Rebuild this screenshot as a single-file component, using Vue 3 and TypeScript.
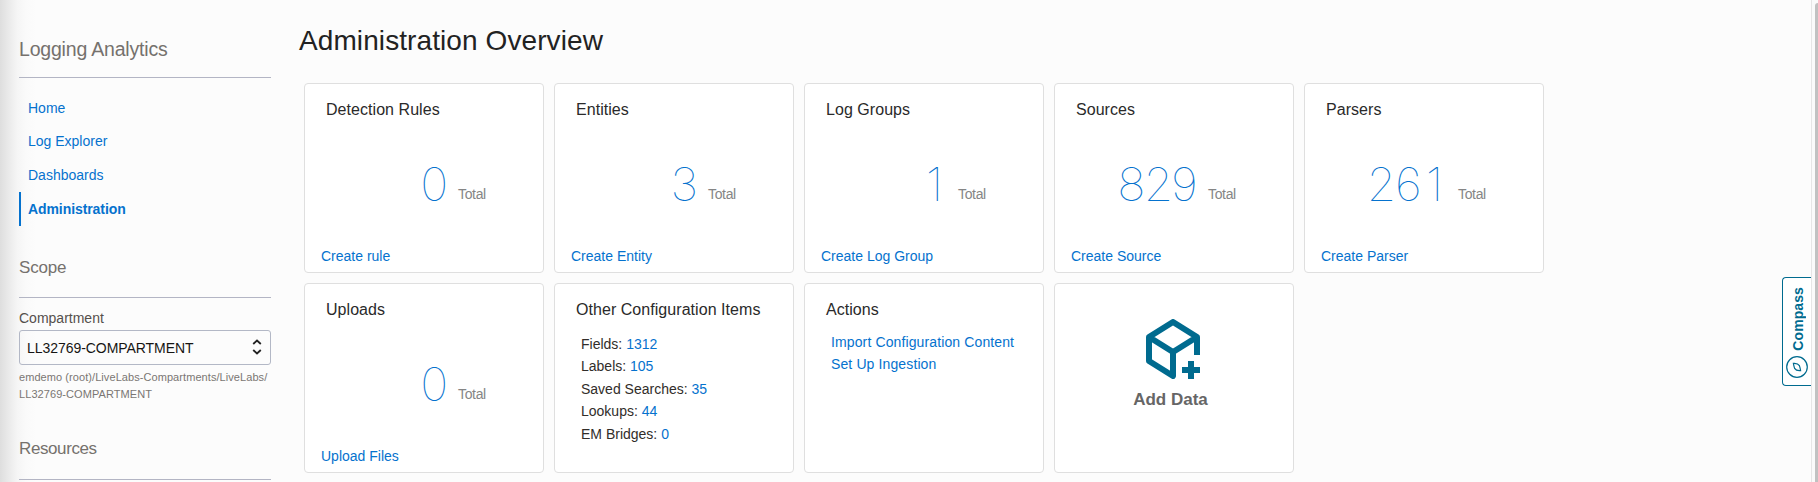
<script setup lang="ts">
interface NavItem { label: string; active?: boolean }
interface Stat { title: string; total: number; link: string }
interface ConfigItem { label: string; value: number }

const nav: NavItem[] = [
  { label: 'Home' },
  { label: 'Log Explorer' },
  { label: 'Dashboards' },
  { label: 'Administration', active: true },
]

const stats: Stat[] = [
  { title: 'Detection Rules', total: 0, link: 'Create rule' },
  { title: 'Entities', total: 3, link: 'Create Entity' },
  { title: 'Log Groups', total: 1, link: 'Create Log Group' },
  { title: 'Sources', total: 829, link: 'Create Source' },
  { title: 'Parsers', total: 261, link: 'Create Parser' },
  { title: 'Uploads', total: 0, link: 'Upload Files' },
]

const configItems: ConfigItem[] = [
  { label: 'Fields', value: 1312 },
  { label: 'Labels', value: 105 },
  { label: 'Saved Searches', value: 35 },
  { label: 'Lookups', value: 44 },
  { label: 'EM Bridges', value: 0 },
]

const actions: string[] = ['Import Configuration Content', 'Set Up Ingestion']
</script>

<template>
  <div class="page">
    <aside class="sidebar">
      <h2 class="product">Logging Analytics</h2>
      <nav class="nav">
        <a v-for="item in nav" :key="item.label" class="nav-item" :class="{ active: item.active }">{{ item.label }}</a>
      </nav>
      <h3 class="section scope">Scope</h3>
      <label class="label">Compartment</label>
      <div class="select">
        <span>LL32769-COMPARTMENT</span>
        <svg class="chevrons" viewBox="0 0 10 16" width="10" height="16">
          <path d="M1.2 5 5 1.5 8.8 5M1.2 11 5 14.5 8.8 11" />
        </svg>
      </div>
      <p class="path">emdemo (root)/LiveLabs-Compartments/LiveLabs/<br />LL32769-COMPARTMENT</p>
      <h3 class="section resources">Resources</h3>
    </aside>

    <main class="main">
      <h1 class="title">Administration Overview</h1>
      <div class="grid">
        <section v-for="s in stats" :key="s.title" class="card">
          <h4 class="card-title">{{ s.title }}</h4>
          <div class="stat">
            <span class="number"><span v-for="(d, i) in String(s.total)" :key="i" class="digit">{{ d }}</span></span>
            <span class="total">Total</span>
          </div>
          <a class="card-link">{{ s.link }}</a>
        </section>
        <section class="card">
          <h4 class="card-title">Other Configuration Items</h4>
          <ul class="list">
            <li v-for="c in configItems" :key="c.label">{{ c.label }}: <a>{{ c.value }}</a></li>
          </ul>
        </section>
        <section class="card">
          <h4 class="card-title">Actions</h4>
          <ul class="list actions">
            <li v-for="a in actions" :key="a"><a>{{ a }}</a></li>
          </ul>
        </section>
        <section class="card add">
          <svg class="cube" viewBox="0 0 54 60" width="54" height="60">
            <path d="M51 36V18L27 3 3 18v24l24 15V33M3 18l24 15 24-15" />
            <path class="plus" d="M45 42v18M36 51h18" />
          </svg>
          <span class="add-label">Add Data</span>
        </section>
      </div>
    </main>

    <div class="compass">
      <span class="compass-text">Compass</span>
      <svg viewBox="0 0 22 22" width="22" height="22">
        <circle cx="11" cy="11" r="10.3" />
        <path d="M7.4 7.4Q11.8 7 13.4 9.6Q14.2 12 14.6 14.6Q10.2 15 8.6 12.4Q7.8 10 7.4 7.4Z" />
      </svg>
    </div>
    <div class="scroll"><div class="thumb"></div></div>
  </div>
</template>

<style>
body { overflow: hidden; background: #fcfcfc; }
</style>

<style scoped>
.page {
  position: relative;
  display: flex;
  width: 1818px;
  height: 482px;
  overflow: hidden;
  background: #fcfcfc;
  font-family: "Liberation Sans", Arial, sans-serif;
  font-size: 14px;
  color: #312d2a;
}
h1, h2, h3, h4, p, ul { margin: 0; padding: 0; font-weight: 400; }
a { color: #0572ce; }
.sidebar {
  box-sizing: border-box;
  flex: none;
  width: 299px;
  height: 482px;
  padding: 37px 28px 0 19px;
  background: linear-gradient(90deg, #dedede 0, #e9e9e9 8px, #f5f5f5 17px, #fafafa 26px, #fcfcfc 36px);
}
.product {
  box-sizing: border-box;
  height: 41px;
  border-bottom: 1px solid #b3b5c4;
  font-size: 19.5px;
  line-height: 24px;
  letter-spacing: -0.19px;
  color: #75716d;
}
.nav { box-sizing: border-box; padding-top: 12.8px; height: 148px; display: flex; flex-direction: column; }
.nav-item {
  box-sizing: border-box;
  height: 33.5px;
  padding-left: 9px;
  line-height: 34px;
}
.nav-item.active { height: 34px; margin-top: 0.7px; padding-left: 7px; border-left: 2px solid #0572ce; font-weight: 700; letter-spacing: -0.08px; }
.section {
  box-sizing: border-box;
  height: 41px;
  border-bottom: 1px solid #b3b5c4;
  font-size: 17px;
  line-height: 22px;
  color: #75716d;
}
.scope { margin-top: 30.6px; letter-spacing: -0.2px; }
.label { display: block; margin-top: 10px; line-height: 20px; color: #55504c; }
.select {
  box-sizing: border-box;
  display: flex;
  align-items: center;
  justify-content: space-between;
  height: 35px;
  margin-top: 2px;
  padding: 1px 8px 0 7px;
  border: 1px solid #b3b8c6;
  border-radius: 3px;
  color: #161513;
}
.select span { letter-spacing: -0.05px; }
.chevrons { margin-bottom: 2px; fill: none; stroke: #222; stroke-width: 1.8; }
.path { margin-top: 4px; font-size: 11px; line-height: 17px; letter-spacing: 0.07px; color: #7a7673; white-space: nowrap; }
.resources { margin-top: 35px; height: 42px; letter-spacing: -0.4px; }

.main { padding-top: 24px; }
.title { height: 54px; font-size: 28px; line-height: 34px; letter-spacing: 0.09px; color: #222; }
.grid {
  display: grid;
  grid-template-columns: repeat(5, 240px);
  grid-auto-rows: 190px;
  gap: 10px;
  padding: 5px 0 0 5px;
}
.card {
  box-sizing: border-box;
  display: flex;
  flex-direction: column;
  border: 1px solid #dfdfdf;
  border-radius: 4px;
  padding: 16px 16px 0;
  background: #fff;
}
.card-title { padding-left: 5px; font-size: 16px; line-height: 20px; letter-spacing: 0.05px; color: #2a2a2a; }
.stat {
  display: flex;
  align-items: flex-start;
  justify-content: flex-end;
  height: 60px;
  margin-top: 36px;
}
.number {
  display: flex;
  margin-right: 10px;
  font-family: Inter, Roboto, sans-serif;
  font-size: 46px;
  line-height: 57px;
  font-weight: 100;
  color: #0572ce;
}
.digit {
  display: flex;
  justify-content: center;
  width: 26.7px;
  transform: scaleX(1.03);
}
.total { width: 69px; padding-top: 28px; font-size: 14px; line-height: 20px; letter-spacing: -0.35px; color: #858585; }
.card-link { margin-top: 30px; line-height: 20px; }
.list { list-style: none; padding: 12.6px 0 0 10px; }
.list li { height: 22.5px; line-height: 22px; }
.actions { padding-top: 11px; letter-spacing: 0.12px; }
.actions li { height: 22px; }
.add { align-items: center; padding-top: 35px; }
.cube { margin-right: 2px; fill: none; stroke: #006b8f; stroke-width: 6; stroke-linejoin: round; }
.add-label { margin: 10px 7px 0 0; font-size: 17px; font-weight: 700; line-height: 22px; color: #666; }

.compass {
  position: absolute;
  box-sizing: border-box;
  right: 7px;
  top: 277px;
  width: 29px;
  height: 109px;
  display: flex;
  flex-direction: column;
  align-items: center;
  justify-content: flex-end;
  gap: 5px;
  padding-bottom: 7px;
  border: 1px solid #006b8f;
  border-right: 0;
  border-radius: 4px 0 0 4px;
  background: #fff;
  color: #006b8f;
}
.compass-text { writing-mode: vertical-rl; transform: rotate(180deg); font-weight: 700; font-size: 14px; line-height: 16px; letter-spacing: 0.1px; padding-right: 2px; }
.compass svg { fill: none; stroke: #006b8f; stroke-width: 1.2; }
.scroll {
  position: absolute;
  box-sizing: border-box;
  right: 0;
  top: 0;
  width: 7px;
  height: 482px;
  border-left: 1px solid #e6e6e6;
  padding: 3px 0 0 3px;
  background: #fafafa;
}
.thumb { height: 479px; border-top-left-radius: 3px; background: #c1c1c1; }
</style>
